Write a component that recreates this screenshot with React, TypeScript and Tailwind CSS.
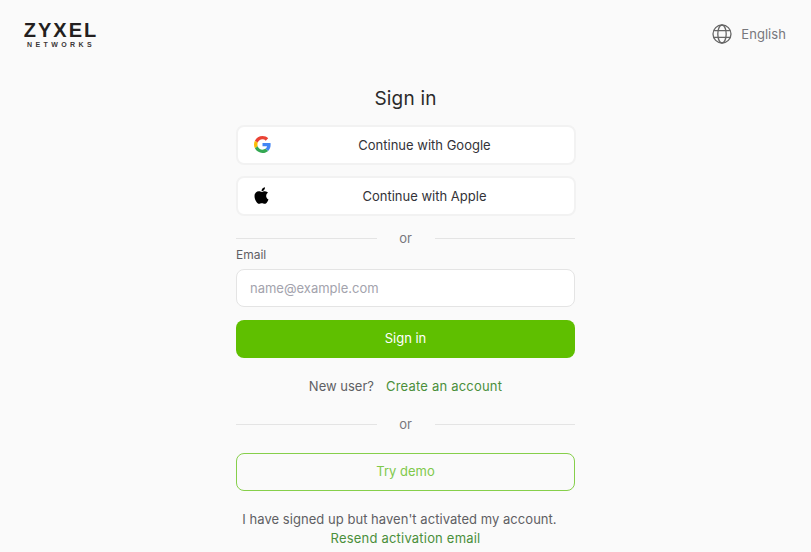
import { FaApple } from "react-icons/fa";

const OrDivider = () => (
  <div className="flex items-center">
    <div className="h-px flex-1 bg-[#e4e4e4]" />
    <span className="w-[58px] text-center text-[13px] leading-4 text-[#77777c]">or</span>
    <div className="h-px flex-1 bg-[#e4e4e4]" />
  </div>
);

const GoogleIcon = () => (
  <svg viewBox="0 0 48 48" className="h-[17px] w-[17px]">
    <path fill="#EA4335" d="M24 9.5c3.5 0 6.7 1.2 9.2 3.6l6.9-6.9C35.9 2.4 30.5 0 24 0 14.6 0 6.5 5.4 2.6 13.2l8 6.2C12.5 13.700 17.800 9.500 24 9.500z" />
    <path fill="#4285F4" d="M46.900 24.500c0-1.600-.1-3.100-.4-4.500H24v9h12.900c-.6 3-2.300 5.500-4.800 7.200l7.700 6c4.500-4.200 7.100-10.300 7.100-17.700z" />
    <path fill="#FBBC05" d="M10.500 28.600c-.5-1.400-.8-3-.8-4.600s.3-3.200.8-4.600l-8-6.200C.9 16.500 0 20.100 0 24s.9 7.500 2.600 10.800l7.900-6.200z" />
    <path fill="#34A853" d="M24 48c6.500 0 11.900-2.100 15.900-5.800l-7.700-6c-2.200 1.400-4.900 2.300-8.200 2.300-6.200 0-11.500-4.200-13.400-9.900l-8 6.200C6.500 42.600 14.600 48 24 48z" />
  </svg>
);

const GlobeIcon = () => (
  <svg viewBox="0 0 20 20" fill="none" stroke="#666666" strokeWidth="1.3" className="h-5 w-5">
    <circle cx="10" cy="10" r="9" />
    <ellipse cx="10" cy="10" rx="4.2" ry="9" />
    <path d="M1.800 6.700h16.400M1.800 13.300h16.400" />
  </svg>
);

export default function App() {
  return (
    <div className="relative h-[552px] w-[811px] overflow-hidden bg-[#fafafa] font-['Inter',sans-serif] text-[13px]">
      <header className="flex items-start justify-between pl-[25px] pr-[25px] pt-[21px]">
        <div className="flex w-[72px] flex-col items-center">
          <span className="whitespace-nowrap font-['Liberation_Sans',sans-serif] text-[20px] font-bold leading-[18px] tracking-[2px] text-[#231f20]">ZYXEL</span>
          <span className="mt-[2px] whitespace-nowrap font-['Liberation_Sans',sans-serif] text-[7px] font-bold leading-[8px] tracking-[3.400px] text-[#3a3637]">NETWORKS</span>
        </div>
        <div className="mt-[3px] flex items-center gap-[9px]">
          <GlobeIcon />
          <span className="text-[13px] leading-5 tracking-[0.060px] text-[#77777c]">English</span>
        </div>
      </header>

      <main className="ml-[236px] mt-[38px] w-[339px]">
        <h1 className="text-center text-[19px] font-normal leading-6 tracking-[0.200px] text-[#2b2b2b]">Sign in</h1>

        <button className="relative mt-[14px] flex h-[40px] w-[340px] items-center justify-center rounded-lg border-2 border-[#f2f2f2] bg-white pl-[37px] pt-[2px] text-[#333338]">
          <span className="absolute left-[16px] top-[9px] flex"><GoogleIcon /></span>
          Continue with Google
        </button>
        <button className="relative mt-[11px] flex h-[40px] w-[340px] items-center justify-center rounded-lg border-2 border-[#f2f2f2] bg-white pl-[37px] pt-[2px] text-[#333338]">
          <FaApple className="absolute left-[14px] top-[8px] h-[19px] w-[19px] text-black" />
          Continue with Apple
        </button>

        <div className="mt-[14px]"><OrDivider /></div>

        <label className="block text-[12px] leading-[17px] text-[#5f5f64]">Email</label>
        <input
          placeholder="name@example.com"
          className="mt-[6px] block h-[38px] w-full rounded-lg border border-[#e4e4e4] bg-white px-[13px] text-[13px] outline-none placeholder:text-[#a3a3ad]"
        />
        <button className="mt-[13px] h-[38px] w-full rounded-lg bg-[#5fbf00] text-white">Sign in</button>

        <p className="mt-[20px] flex justify-center gap-[12px] leading-4">
          <span className="text-[#5f5f64]">New user?</span>
          <a className="tracking-[0.200px] text-[#4a8f3a]">Create an account</a>
        </p>

        <div className="mt-[22px]"><OrDivider /></div>

        <button className="mt-[21px] h-[38px] w-full rounded-lg border border-[#86cf4a] text-[#7fc94a]">Try demo</button>

        <p className="mt-[19px] pr-[12px] text-center leading-[19px] tracking-[0.040px] text-[#5f5f64]">I have signed up but haven't activated my account.</p>
        <p className="text-center leading-[19px]"><a className="tracking-[0.200px] text-[#4a8f3a]">Resend activation email</a></p>
      </main>
    </div>
  );
}
